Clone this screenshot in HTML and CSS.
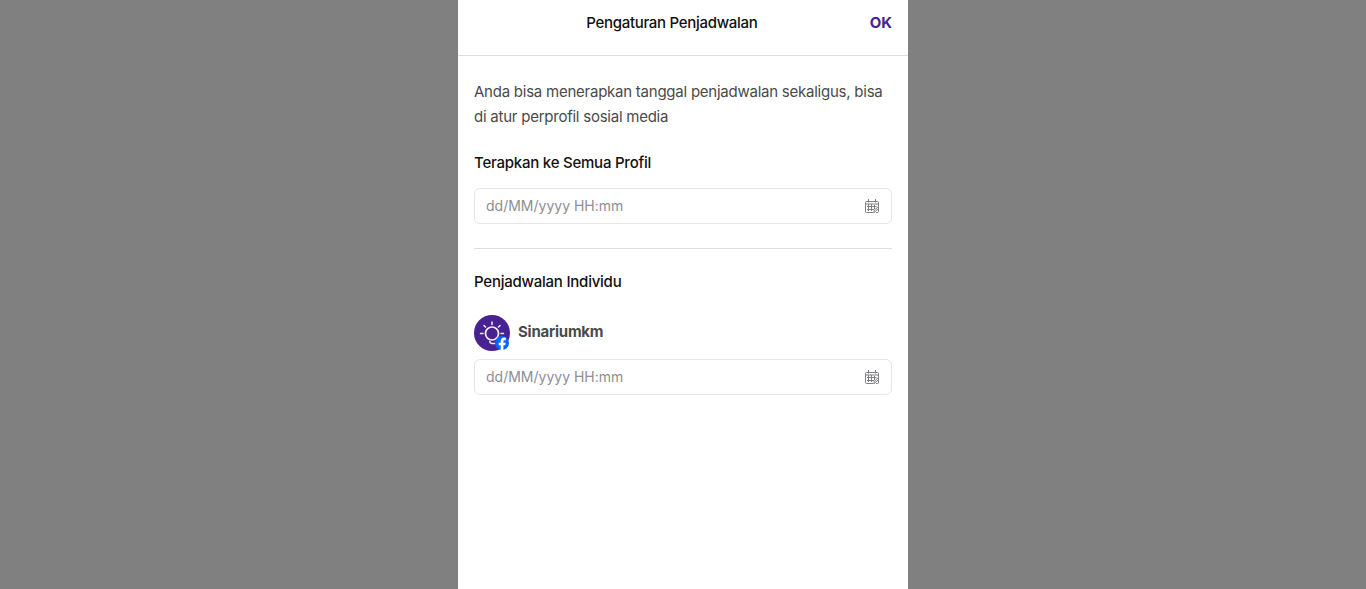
FILE: index.html
```html
<!DOCTYPE html>
<html lang="id">
<head>
<meta charset="utf-8">
<title>Pengaturan Penjadwalan</title>
<link rel="stylesheet" href="styles.css">
</head>
<body>
<svg class="defs" aria-hidden="true">
  <symbol id="calendar" viewBox="0 0 16 16">
    <g fill="none" stroke="currentColor" stroke-width="1">
      <path d="M9.500 14.500H2.500A1 1 0 0 1 1.500 13.500V4.500A1 1 0 0 1 2.500 3.500H13.500A1 1 0 0 1 14.500 4.500V8.500M1.500 6H14.500M4.500 1V4.500M11.500 1V4.500M3 8.500H12.500M3 11.500H10M4.500 6V13M7.500 6V13M10.500 7V11M10 14.500V12.500L14.500 8.500V13.500A1 1 0 0 1 13.500 14.500H12M10 14.500L14.500 10.500"/>
    </g>
  </symbol>
</svg>
<main class="panel">
  <header class="header">
    <h1 class="title">Pengaturan Penjadwalan</h1>
    <button class="ok">OK</button>
  </header>
  <div class="content">
    <p class="intro">Anda bisa menerapkan tanggal penjadwalan sekaligus, bisa di atur perprofil sosial media</p>
    <section class="all">
      <h2 class="heading">Terapkan ke Semua Profil</h2>
      <div class="field"><span>dd/MM/yyyy HH:mm</span><svg class="cal"><use href="#calendar"/></svg></div>
    </section>
    <section class="individual">
      <h2 class="heading">Penjadwalan Individu</h2>
      <div class="profile">
        <svg class="avatar" viewBox="0 0 36 36">
          <circle cx="18" cy="18" r="18" fill="#482292"/>
          <g fill="none" stroke="#fff" stroke-opacity=".93" stroke-width="1.500" stroke-linecap="round">
            <circle cx="18" cy="18.500" r="6.500" stroke-width="1.700"/>
            <path d="M18 7V9.500M10 10.500L11.500 12M26 10.500L24.500 12M6.500 18.500H9M27 18.500H29.500M15.800 26.200C15.800 29 18.500 28.500 21 28.500"/>
          </g>
          <circle cx="28" cy="28" r="7" fill="#0866ff"/>
          <path d="M26.700 34.900V30.300H24.700V27.800H26.700V26.500C26.700 23.800 28 22.600 30.200 22.600L31.800 22.800V25.200H30.700C29.800 25.200 29.400 25.600 29.400 26.500V27.800H31.700L31.300 30.300H29.400V34.900Z" fill="#fff"/>
        </svg>
        <span class="name">Sinariumkm</span>
      </div>
      <div class="field"><span>dd/MM/yyyy HH:mm</span><svg class="cal"><use href="#calendar"/></svg></div>
    </section>
  </div>
</main>
</body>
</html>
```
FILE: styles.css
```css
* { box-sizing: border-box; }
body { margin: 0; background: #808080; font-family: Inter, sans-serif; font-size: 15px; }
.defs { display: none; }
.panel { width: 450px; height: 589px; margin: 0 auto; background: #fff; overflow: hidden; }
.header { display: flex; height: 56px; padding: 10px 16px 0; border-bottom: 1px solid #dedede; line-height: 25px; }
.title { flex: 1; margin: 0; text-align: center; font-size: 15px; font-weight: 500; letter-spacing: -.3px; color: #111; }
.ok { align-self: start; padding: 0; border: 0; background: none; font: 700 15px/25px Inter, sans-serif; color: #482292; }
.content { padding: 23px 16px 0; }
.intro { margin: 0; line-height: 25px; letter-spacing: -.24px; color: #4a4a4a; }
.all { padding: 21px 0 24px; border-bottom: 1px solid #dedee3; }
.heading { margin: 0; font-size: 15px; line-height: 25px; font-weight: 500; letter-spacing: -.23px; color: #111; }
.field { display: flex; align-items: center; justify-content: space-between; height: 36px; padding: 0 11px 1px; border: 1px solid #e5e5ea; border-radius: 6px; font-size: 14px; color: #8e8e93; }
.field span { margin-top: -1px; }
.all .field { margin-top: 13px; }
.cal { width: 16px; height: 16px; margin-top: 1px; color: #7e7e83; }
.individual { padding-top: 20px; }
.profile { display: flex; align-items: center; gap: 8px; margin: 21px 0 8px; }
.avatar { width: 36px; height: 36px; }
.name { font-weight: 700; line-height: 25px; letter-spacing: -.24px; color: #4a4a4a; margin-top: -3px; }
```
